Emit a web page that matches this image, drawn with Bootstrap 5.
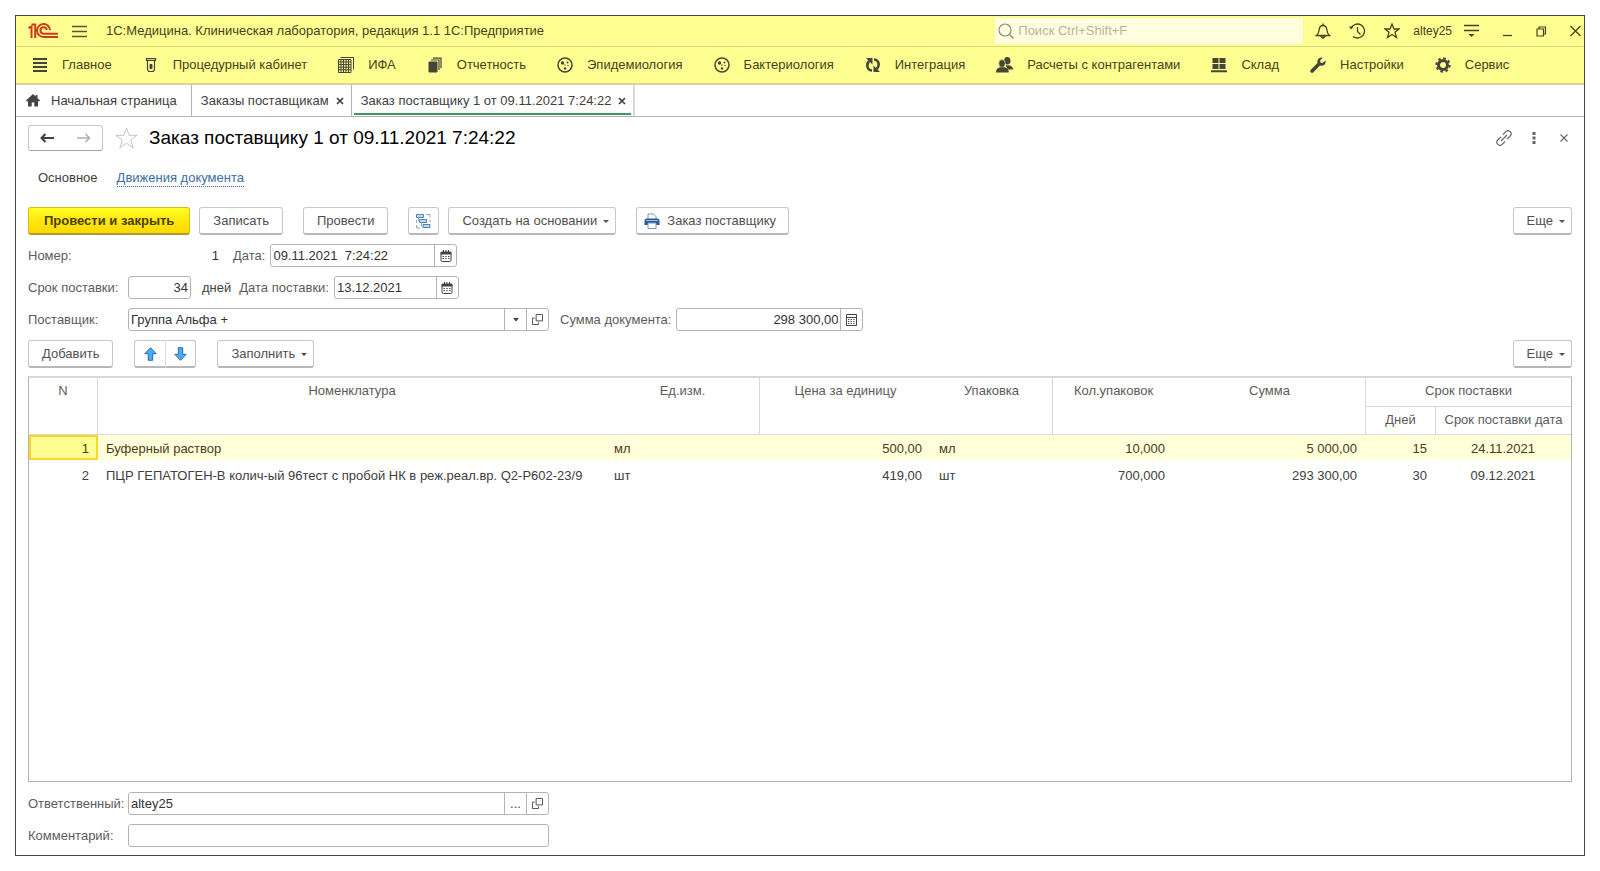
<!DOCTYPE html>
<html lang="ru">
<head>
<meta charset="utf-8">
<meta name="viewport" content="width=device-width, initial-scale=1">
<title>Заказ поставщику 1 от 09.11.2021 7:24:22</title>
<link href="https://cdn.jsdelivr.net/npm/bootstrap@5.3.0/dist/css/bootstrap.min.css" rel="stylesheet">
<style>
  :root { --line: #b4b4b4; --soft: #d8d8d8; --bar: #ffff91; }
  body { font-family: "Liberation Sans", Arial, sans-serif; font-size: 13px; line-height: 20px; color: #404040; background: #fff; padding: 15px; }
  .app-frame { min-height: calc(100vh - 30px); border: 1px solid #484840; }
  svg { display: block; flex: none; }
  .plain { border: 0; background: none; padding: 0; color: inherit; }

  .title-bar { height: 31px; background: var(--bar); border-bottom: 1px solid #d6d67c; color: #45421e; padding: 0 1px 0 12px; }
  .app-menu { margin: 0 19px 0 14px; }
  .search-box { width: 308px; height: 26px; background: #ffffdf; padding: 0 3px; gap: 4px; color: #8f8c78; }
  .search-box input { border: 0; background: none; outline: 0; padding: 0; color: #45421e; min-width: 0; }
  .search-box input::placeholder { color: #b9b39b; opacity: 1; }
  .title-tools { gap: 18px; margin-left: 12px; }
  .user-box { gap: 12px; margin-left: 13px; }
  .user-name { font-size: 12px; }
  .win-tools { gap: 18px; margin-left: 20px; }

  .section-bar { height: 38px; background: var(--bar); border-bottom: 2px solid #dcd49c; padding: 0 16px; gap: 31px; }
  .section-bar a { display: flex; align-items: center; gap: 14px; color: #45421e; text-decoration: none; white-space: nowrap; }
  .section-bar svg { color: #45453a; }

  .tab-bar { height: 32px; border-bottom: 1px solid var(--line); }
  .tab-item { padding: 0 7px 0 9px; gap: 7px; border-right: 1px solid var(--line); white-space: nowrap; }
  .tab-item a { color: #404040; text-decoration: none; }
  .tab-home { padding: 0 14px 0 10px; gap: 11px; }
  .tab-open { background: linear-gradient(#3d9963, #3d9963) 2px 28px / calc(100% - 4px) 2px no-repeat; border-right: 2px solid var(--soft); }

  .doc-area { padding: 8px 12px 8px; }
  .nav-pair { height: 26px; width: 75px; border: 1px solid #c8c8c8; border-bottom-color: #a4a4a4; border-radius: 3px; }
  .doc-title { font-size: 19px; line-height: 26px; color: #000; margin: 0; }
  .fav-star { margin: 0 11px 0 12px; }
  .doc-nav { margin: 16px 0 18px; padding-left: 10px; gap: 19px; line-height: 22px; }
  .doc-nav a { color: #3c6ea5; text-decoration: none; line-height: 16px; border-bottom: 1px dotted #3c6ea5; }

  .cmd { display: flex; align-items: center; height: 28px; padding: 0 13px; color: #505050; background: #fff; border: 1px solid #c8c8c8; border-bottom: 2px solid #b8b8b8; border-radius: 3px; white-space: nowrap; }
  .cmd-main { font-weight: 700; padding: 0 15px; color: #4a4000; background: linear-gradient(#ffff26, #ffe80c 50%, #ffd900); border-color: #d9bd10; border-bottom-color: #b09a30; }
  .cmd-menu { padding-right: 6px; }
  .cmd-menu::after { content: ""; border: 3px solid transparent; border-top-color: #505050; border-bottom: 0; margin: 2px 0 0 6px; }
  .cmd-icon { padding: 0 6px; }
  .cmd-print { padding: 0 12px 0 7px; }
  .cmd-print svg { margin-right: 7px; }
  .cmd-group .cmd { width: 31px; padding: 0; justify-content: center; }
  .cmd-group .cmd:first-child { border-radius: 3px 0 0 3px; border-right: 0; }
  .cmd-group .cmd:last-child { border-radius: 0 3px 3px 0; border-left-color: var(--soft); }
  .cmd-row { gap: 9px; }
  .wide-gap { margin-left: 11px; }
  .block-gap { margin-left: 21px; }

  .form-rows { display: flex; flex-direction: column; gap: 9px; }
  .form-body { margin: 9px 0; }
  .field-row { display: flex; align-items: center; height: 23px; white-space: nowrap; }
  .field-label { color: #5c5c5c; margin-right: 5px; }
  .field-first { width: 100px; margin-right: 0; flex: none; }
  .field-next { margin-left: 11px; }
  .box { display: flex; height: 23px; border: 1px solid var(--line); border-radius: 3px; background: #fff; }
  .box input { flex: 1; min-width: 0; border: 0; background: none; outline: 0; padding: 0 2px; color: #333; }
  .box button { width: 22px; border: 0; border-left: 1px solid var(--line); background: none; padding: 0; display: flex; align-items: center; justify-content: center; color: #444; flex: none; }
  .box-bare { border-color: transparent; }
  .w-num { width: 94px; } .w-days { width: 63px; } .w-stamp { width: 187px; } .w-date { width: 125px; } .w-ref { width: 421px; }

  .grid-box { border: 1px solid var(--line); border-top: 2px solid var(--soft); overflow: auto; margin: 8px 0 10px; }
  .grid-table { width: 100%; table-layout: fixed; border-collapse: separate; border-spacing: 0; }
  .grid-table th { font-weight: 400; text-align: center; vertical-align: top; color: #5c5c5c; line-height: 20px; padding: 3px 0 5px; border-bottom: 1px solid var(--soft); white-space: nowrap; }
  .grid-table thead tr + tr th { padding-bottom: 4px; }
  .grid-table .split { border-right: 1px solid var(--soft); }
  .grid-table td { height: 27px; line-height: 23px; padding: 2px 9px 0 8px; border-bottom: 2px solid #fff; background-clip: padding-box; white-space: nowrap; overflow: hidden; }
  .grid-table .row-current td { background-color: #ffffd9; color: #4a3c1c; }
  .grid-table .row-current .cell-current { background: #ffff91; box-shadow: inset 0 0 0 2px #ffd52b; }
</style>
</head>
<body>
<svg width="0" height="0" class="position-absolute" aria-hidden="true">
  <symbol id="i-cal" viewBox="0 0 12 12"><path d="M1 3.500h10v6.700a1.300 1.300 0 0 1-1.300 1.300H2.300A1.300 1.300 0 0 1 1 10.200z" fill="#fff" stroke="currentColor"/><path d="M.5 4.500V2.500l1-1h9l1 1v2z" fill="currentColor"/><path d="M3.500 0v2M6 0v2M8.500 0v2" stroke="currentColor"/><path d="M2.500 6.500h7M2.500 8.500h7" stroke="currentColor" stroke-width="1.200" stroke-dasharray="1.400 1.400"/></symbol>
  <symbol id="i-open" viewBox="0 0 12 12"><path d="M4.500.5h7v7h-7zM3 4.500H.5v7h6.500V9" fill="none" stroke="currentColor"/></symbol>
  <symbol id="i-x" viewBox="0 0 8 8"><path d="M1 1l6 6M7 1L1 7" fill="none" stroke="currentColor" stroke-width="1.700"/></symbol>
  <symbol id="i-cell" viewBox="0 0 16 16"><circle cx="8" cy="8" r="7" fill="none" stroke="currentColor" stroke-width="1.500"/><circle cx="5.500" cy="6" r="1.700" fill="currentColor"/><circle cx="10.500" cy="5.500" r="1" fill="currentColor"/><circle cx="8" cy="8" r=".7" fill="currentColor"/><circle cx="11" cy="8.500" r=".7" fill="currentColor"/><circle cx="8" cy="11.500" r="1.200" fill="currentColor"/></symbol>
</svg>

<div class="app-frame d-flex flex-column">
  <header class="title-bar d-flex align-items-center">
    <svg width="30" height="16" viewBox="0 0 30 16" fill="none" stroke="#d03a1c" stroke-width="2" role="img" aria-label="1С"><path d="M.5 5L3.500 3.500V15M3.500 1.500H7.200V15"/><path d="M22 7A6.500 6.500 0 1 0 15.500 14H30"/><path d="M18.800 7A3.200 3.200 0 1 0 15.500 10.700H30"/></svg>
    <button class="plain app-menu" type="button" aria-label="Меню"><svg width="15" height="13" viewBox="0 0 15 13" stroke="#5b5730" stroke-width="1.300"><path d="M0 1.500h15M0 6.500h15M0 11.500h15"/></svg></button>
    <span class="text-nowrap">1С:Медицина. Клиническая лаборатория, редакция 1.1 1С:Предприятие</span>
    <label class="search-box d-flex align-items-center ms-auto">
      <svg width="16" height="16" viewBox="0 0 16 16" fill="none" stroke="currentColor" stroke-width="1.200"><circle cx="7" cy="7" r="6"/><path d="M11.500 11.500L15.500 15.500"/></svg>
      <input class="flex-grow-1" type="text" placeholder="Поиск Ctrl+Shift+F" aria-label="Поиск">
    </label>
    <div class="title-tools d-flex align-items-center">
      <button class="plain" type="button" aria-label="Оповещения"><svg width="16" height="16" viewBox="0 0 16 16" fill="none" stroke="currentColor" stroke-width="1.300"><path d="M1.500 12.500C3.500 11 4 9 4.200 6.500 4.500 4 6 2.500 8 2.500S11.500 4 11.800 6.500C12 9 12.500 11 14.500 12.500z"/><path d="M8 .5v2M6.500 14h3l-1.500 1.200z"/></svg></button>
      <button class="plain" type="button" aria-label="История"><svg width="17" height="16" viewBox="0 0 17 16" fill="none" stroke="currentColor" stroke-width="1.300"><path d="M2.200 5A7 7 0 1 1 4.200 13.500M8.500 4v4.500l3 3"/><path d="M0 3.500h4.500L2 6.500z" fill="currentColor" stroke="none"/></svg></button>
      <button class="plain" type="button" aria-label="Избранное"><svg width="16" height="16" viewBox="0 0 16 16" fill="none" stroke="currentColor" stroke-width="1.300"><path d="M8 1l2 5h5l-4 3.300 1.500 5.200L8 11.500l-4.500 3L5 9.300 1 6h5z"/></svg></button>
    </div>
    <div class="user-box d-flex align-items-center">
      <span class="user-name">altey25</span>
      <button class="plain" type="button" aria-label="Сервис и настройки"><svg width="15" height="14" viewBox="0 0 15 14" stroke="currentColor" stroke-width="1.300"><path d="M0 1.500h15M0 6.500h15"/><path d="M4.500 10h6l-3 3z" fill="currentColor" stroke="none"/></svg></button>
    </div>
    <div class="win-tools d-flex align-items-center">
      <button class="plain" type="button" aria-label="Свернуть"><svg width="16" height="14" viewBox="0 0 16 14" stroke="currentColor" stroke-width="1.300"><path d="M4 11.500h9"/></svg></button>
      <button class="plain" type="button" aria-label="Восстановить"><svg width="16" height="14" viewBox="0 0 16 14" fill="none" stroke="currentColor" stroke-width="1.200"><path d="M4 5h6.500v7H4zM6 5V3h6.500v7h-2"/></svg></button>
      <button class="plain" type="button" aria-label="Закрыть"><svg width="16" height="14" viewBox="0 0 16 14" stroke="currentColor" stroke-width="1.300"><path d="M3.500 2l10 10M13.500 2l-10 10"/></svg></button>
    </div>
  </header>

  <nav class="section-bar d-flex align-items-stretch" aria-label="Разделы">
    <a href="#"><svg width="16" height="16" viewBox="0 0 16 16" stroke="currentColor" stroke-width="2"><path d="M1 2h14M1 6h14M1 10h14M1 14h14"/></svg>Главное</a>
    <a href="#"><svg width="16" height="16" viewBox="0 0 16 16" fill="none" stroke="currentColor" stroke-width="1.200"><path d="M3.500 1.500h9v1.800h-9zM4.500 3.500v8.500a2.500 2.500 0 0 0 2.500 2.500h2a2.500 2.500 0 0 0 2.500-2.500v-8.500"/><path d="M7 7.500h2v4H7z" fill="currentColor" stroke-width="1"/></svg>Процедурный кабинет</a>
    <a href="#"><svg width="16" height="16" viewBox="0 0 16 16" fill="none" stroke="currentColor"><path d="M.5 2.500h12.500v13H.5zM.5 5h12.500M.5 7.600h12.500M.5 10.200h12.500M.5 12.800h12.500M3 2.500v13M5.500 2.500v13M8 2.500v13M10.500 2.500v13M2.500.5h13v12"/></svg>ИФА</a>
    <a href="#"><svg width="16" height="16" viewBox="0 0 16 16" fill="none" stroke="currentColor"><path d="M2 5h8v10H2z" fill="currentColor"/><path d="M4 3h8v10M6 1.200h8v10" stroke-width="1.200"/></svg>Отчетность</a>
    <a href="#"><svg width="16" height="16"><use href="#i-cell"/></svg>Эпидемиология</a>
    <a href="#"><svg width="16" height="16"><use href="#i-cell"/></svg>Бактериология</a>
    <a href="#"><svg width="16" height="16" viewBox="0 0 16 16" fill="none" stroke="currentColor" stroke-width="2.600"><path d="M7 13.500C4 13.300 2.300 11 2.300 8.500 2.300 6.500 3 5.300 4.200 4"/><path d="M9 2.500c3 .2 4.700 2.500 4.700 5 0 2-.7 3.200-1.900 4.500"/><path d="M1 1h6.500v6.500zM15 15H8.500V8.500z" fill="currentColor" stroke="none"/></svg>Интеграция</a>
    <a href="#"><svg width="17" height="16" viewBox="0 0 17 16" fill="currentColor"><ellipse cx="11.300" cy="3.800" rx="3.200" ry="3.800"/><path d="M9.500 8.500c3.500-.8 7.500.5 7.500 4h-5z"/><g stroke="#ffff91" stroke-width=".6"><ellipse cx="6" cy="6.500" rx="3.300" ry="3.900"/></g><path d="M0 15.500c0-4 2.500-4.800 4.200-5.200h4.400c1.800.4 4.200 1.200 4.200 5.200z"/></svg>Расчеты с контрагентами</a>
    <a href="#"><svg width="16" height="16" viewBox="0 0 16 16" fill="currentColor"><path d="M1.500 1h6v5h-6zM8.500 1h6v5h-6zM1.500 7h6v5h-6zM8.500 7h6v5h-6zM0 13.200h16v2H0z"/></svg>Склад</a>
    <a href="#"><svg width="16" height="16" viewBox="0 0 16 16" fill="currentColor"><path d="M15.500 3.500l-3 2.500-2-.5-.5-2L12.700.8C9.500-.2 6.500 2.500 7.500 6L.8 12.700a1.800 1.800 0 0 0 2.600 2.600L10 8.600c3.500 1 6.400-1.900 5.500-5.100z"/></svg>Настройки</a>
    <a href="#"><svg width="16" height="16" viewBox="0 0 16 16" fill="none" stroke="currentColor"><circle cx="8" cy="8" r="4.500" stroke-width="3"/><circle cx="8" cy="8" r="6.700" stroke-width="2" stroke-dasharray="2.630 2.630"/></svg>Сервис</a>
  </nav>

  <nav class="tab-bar d-flex align-items-stretch" aria-label="Открытые окна">
    <div class="tab-item tab-home d-flex align-items-center"><svg width="14" height="13" viewBox="0 0 14 13" fill="#444"><path d="M7 0L0 6.500l1 1.200 1-.9V12.500h3.700V8.500h2.600v4H12V6.800l1 .9 1-1.200-2.500-2.300V1H9.700v1.500z"/></svg><a href="#">Начальная страница</a></div>
    <div class="tab-item d-flex align-items-center"><a href="#">Заказы поставщикам</a><button class="plain" type="button" aria-label="Закрыть вкладку"><svg width="8" height="8"><use href="#i-x"/></svg></button></div>
    <div class="tab-item tab-open d-flex align-items-center"><a href="#" aria-current="page">Заказ поставщику 1 от 09.11.2021 7:24:22</a><button class="plain" type="button" aria-label="Закрыть вкладку"><svg width="8" height="8"><use href="#i-x"/></svg></button></div>
  </nav>

  <main class="doc-area d-flex flex-column flex-grow-1">
    <div class="d-flex align-items-center">
      <div class="nav-pair d-flex align-items-center justify-content-around">
        <button class="plain" type="button" aria-label="Назад"><svg width="14" height="10" viewBox="0 0 14 10" fill="none" stroke="#404040" stroke-width="2"><path d="M14 5H2M5.500 1L1.500 5l4 4"/></svg></button>
        <button class="plain" type="button" aria-label="Вперед"><svg width="14" height="10" viewBox="0 0 14 10" fill="none" stroke="#b0b0b0" stroke-width="1.500"><path d="M0 5h12M8.500 1l4 4-4 4"/></svg></button>
      </div>
      <button class="plain fav-star" type="button" aria-label="В избранное"><svg width="23" height="22" viewBox="0 0 23 22" fill="none" stroke="#c4c4c4"><path d="M11.500 1l2.600 7.300h8L15.700 13l2.500 8-6.700-4.800L4.800 21l2.500-8L.9 8.300h8z"/></svg></button>
      <h1 class="doc-title text-nowrap">Заказ поставщику 1 от 09.11.2021 7:24:22</h1>
      <div class="d-flex align-items-center ms-auto gap-3 pe-1">
        <button class="plain" type="button" aria-label="Ссылка"><svg width="16" height="16" viewBox="0 0 16 16" fill="none" stroke="#666" stroke-width="1.200"><path d="M7 4.500L9.800 1.700a2.800 2.800 0 0 1 4.400 4.300L11 9.200M9 11.500l-2.800 2.800A2.800 2.800 0 0 1 1.800 10L5 6.800M5 11l6-6"/></svg></button>
        <button class="plain px-1" type="button" aria-label="Дополнительно"><svg width="4" height="12" viewBox="0 0 4 12" fill="#666"><path d="M.5 0h3v3h-3zM.5 4.500h3v3h-3zM.5 9h3v3h-3z"/></svg></button>
        <button class="plain ps-1" type="button" aria-label="Закрыть"><svg width="8" height="8" viewBox="0 0 8 8" stroke="#666" stroke-width="1.100"><path d="M.5.5l7 7M7.500.5l-7 7"/></svg></button>
      </div>
    </div>

    <nav class="doc-nav d-flex align-items-center" aria-label="Разделы документа"><span>Основное</span><a href="#">Движения документа</a></nav>

    <div class="cmd-row d-flex">
      <button class="cmd cmd-main" type="button">Провести и закрыть</button>
      <button class="cmd" type="button">Записать</button>
      <button class="cmd wide-gap" type="button">Провести</button>
      <button class="cmd cmd-icon wide-gap" type="button" aria-label="Структура подчиненности"><svg width="17" height="16" viewBox="0 0 17 16" fill="#bcdcf2" stroke="#5583ad"><path d="M1.500 1.500h7v3h-7zM4.500 6.500h7v3h-7zM8 11.500h7v3H8z"/><path d="M3.500 4.500V8h1M6.500 9.500V13h1.500M11 1.500h4v3M15 6.500v3M1.500 7v3M1.500 12v3h3.500" fill="none" stroke="#86aed0"/></svg></button>
      <button class="cmd cmd-menu" type="button">Создать на основании</button>
      <button class="cmd cmd-print wide-gap" type="button"><svg width="16" height="16" viewBox="0 0 16 16"><path d="M4 6V1h5.500L12 3.500V6" fill="#fff" stroke="#8294b4"/><path d="M.5 7l1.500-1.500h12L15.500 7v5H.5z" fill="#2b5a94"/><path d="M2 7.500h12" stroke="#9dc1e8"/><path d="M4 10h8v5.500H4z" fill="#fff" stroke="#8294b4"/></svg>Заказ поставщику</button>
      <button class="cmd cmd-menu ms-auto" type="button">Еще</button>
    </div>

    <div class="form-rows form-body">
      <div class="field-row">
        <label class="field-label field-first" for="f-num">Номер:</label>
        <div class="box box-bare w-num"><input class="text-end" id="f-num" type="text" value="1" readonly></div>
        <label class="field-label field-next" for="f-stamp">Дата:</label>
        <div class="box w-stamp"><input id="f-stamp" type="text" value="09.11.2021  7:24:22"><button type="button" aria-label="Календарь"><svg width="12" height="12"><use href="#i-cal"/></svg></button></div>
      </div>
      <div class="field-row">
        <label class="field-label field-first" for="f-days">Срок поставки:</label>
        <div class="box w-days"><input class="text-end" id="f-days" type="text" value="34"></div>
        <span class="field-next me-2">дней</span>
        <label class="field-label" for="f-due">Дата поставки:</label>
        <div class="box w-date"><input id="f-due" type="text" value="13.12.2021"><button type="button" aria-label="Календарь"><svg width="12" height="12"><use href="#i-cal"/></svg></button></div>
      </div>
      <div class="field-row">
        <label class="field-label field-first" for="f-vendor">Поставщик:</label>
        <div class="box w-ref"><input id="f-vendor" type="text" value="Группа Альфа +"><button type="button" aria-label="Выбрать из списка"><svg width="6" height="4" viewBox="0 0 6 4" fill="currentColor"><path d="M0 0h6L3 3.500z"/></svg></button><button type="button" aria-label="Открыть"><svg width="11" height="11"><use href="#i-open"/></svg></button></div>
        <label class="field-label field-next" for="f-sum">Сумма документа:</label>
        <div class="box w-stamp"><input class="text-end" id="f-sum" type="text" value="298 300,00"><button type="button" aria-label="Калькулятор"><svg width="11" height="12" viewBox="0 0 11 12" fill="none" stroke="currentColor"><path d="M.5.5h10v11H.5zM.5 3.500h10"/><path d="M2 5.500h7M2 7.500h7M2 9.500h7" stroke-width="1.200" stroke-dasharray="1.300 1.300"/></svg></button></div>
      </div>
    </div>

    <div class="d-flex align-items-start">
      <button class="cmd" type="button">Добавить</button>
      <div class="cmd-group d-flex block-gap">
        <button class="cmd" type="button" aria-label="Переместить вверх"><svg width="13" height="14" viewBox="0 0 13 14" fill="#47adf5" stroke="#2a6ca8"><path d="M6.500.7l5.700 6H8.700v6.600H4.300V6.700H.8z"/></svg></button>
        <button class="cmd" type="button" aria-label="Переместить вниз"><svg width="13" height="14" viewBox="0 0 13 14" fill="#47adf5" stroke="#2a6ca8"><path d="M6.500 13.300l5.700-6H8.700V.7H4.300v6.600H.8z"/></svg></button>
      </div>
      <button class="cmd cmd-menu block-gap" type="button">Заполнить</button>
      <button class="cmd cmd-menu ms-auto" type="button">Еще</button>
    </div>

    <div class="grid-box flex-grow-1">
      <table class="grid-table">
        <colgroup><col width="69"><col><col width="154"><col width="171"><col width="122"><col width="121"><col width="192"><col width="70"><col width="135"></colgroup>
        <thead>
          <tr><th class="split" rowspan="2" scope="col">N</th><th rowspan="2" scope="col">Номенклатура</th><th class="split" rowspan="2" scope="col">Ед.изм.</th><th rowspan="2" scope="col">Цена за единицу</th><th class="split" rowspan="2" scope="col">Упаковка</th><th rowspan="2" scope="col">Кол.упаковок</th><th class="split" rowspan="2" scope="col">Сумма</th><th colspan="2" scope="colgroup">Срок поставки</th></tr>
          <tr><th class="split" scope="col">Дней</th><th scope="col">Срок поставки дата</th></tr>
        </thead>
        <tbody>
          <tr class="row-current"><td class="cell-current text-end">1</td><td>Буферный раствор</td><td>мл</td><td class="text-end">500,00</td><td>мл</td><td class="text-end">10,000</td><td class="text-end">5 000,00</td><td class="text-end">15</td><td class="text-center">24.11.2021</td></tr>
          <tr><td class="text-end">2</td><td>ПЦР ГЕПАТОГЕН-В колич-ый 96тест с пробой НК в реж.реал.вр. Q2-P602-23/9</td><td>шт</td><td class="text-end">419,00</td><td>шт</td><td class="text-end">700,000</td><td class="text-end">293 300,00</td><td class="text-end">30</td><td class="text-center">09.12.2021</td></tr>
        </tbody>
      </table>
    </div>

    <div class="form-rows">
      <div class="field-row">
        <label class="field-label field-first" for="f-resp">Ответственный:</label>
        <div class="box w-ref"><input id="f-resp" type="text" value="altey25"><button type="button" aria-label="Выбрать">...</button><button type="button" aria-label="Открыть"><svg width="11" height="11"><use href="#i-open"/></svg></button></div>
      </div>
      <div class="field-row">
        <label class="field-label field-first" for="f-note">Комментарий:</label>
        <div class="box w-ref"><input id="f-note" type="text"></div>
      </div>
    </div>
  </main>
</div>
<script src="https://cdn.jsdelivr.net/npm/bootstrap@5.3.0/dist/js/bootstrap.bundle.min.js"></script>
</body>
</html>
